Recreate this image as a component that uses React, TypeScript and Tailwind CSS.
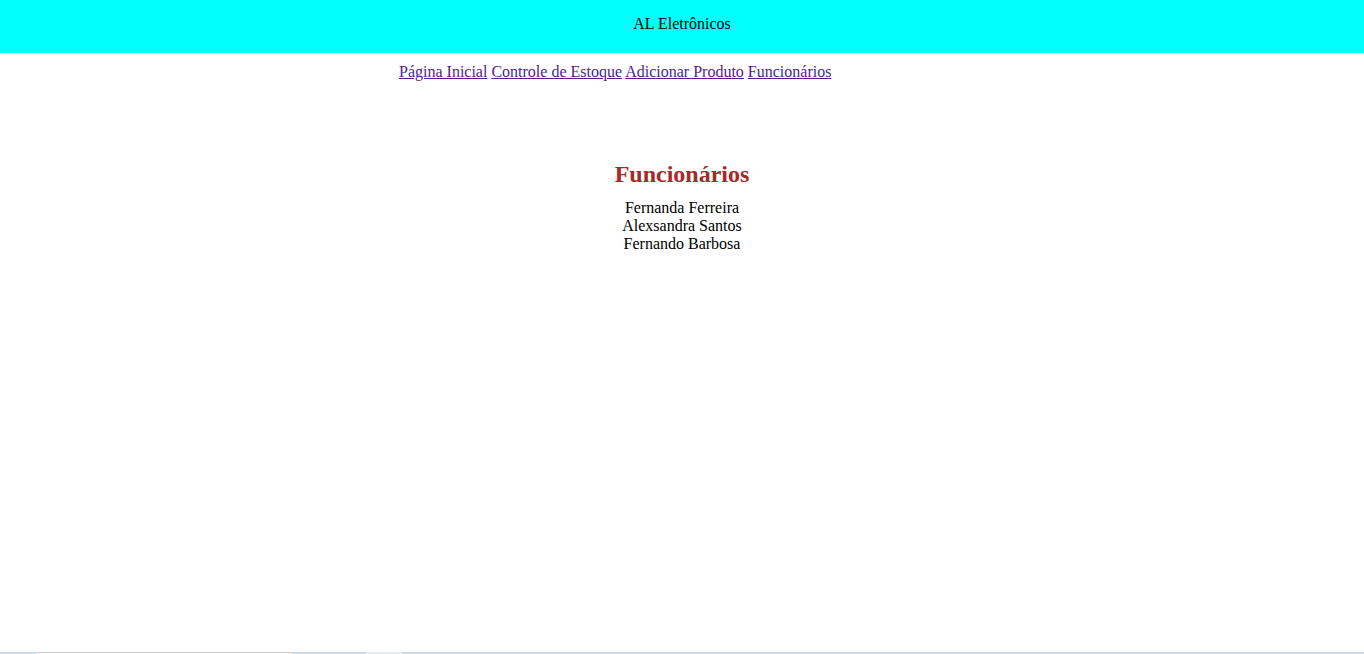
import React from "react";

export default function App() {
  const serif = { fontFamily: '"Liberation Serif", "Times New Roman", serif' };
  return (
    <div className="h-[654px] flex flex-col bg-white text-black overflow-hidden" style={serif}>
      <div className="h-[53px] bg-[#00ffff] pt-[15px] text-center text-[16px] leading-[1.15]">
        AL Eletrônicos
      </div>
      <nav className="mt-[10px] pl-[399px] text-[16px] leading-[1.15] text-[#551a8b]">
        <a href="#" className="underline">Página Inicial</a>{" "}
        <a href="#" className="underline">Controle de Estoque</a>{" "}
        <a href="#" className="underline">Adicionar Produto</a>{" "}
        <a href="#" className="underline">Funcionários</a>
      </nav>
      <h2 className="mt-[80px] text-center text-[24px] font-bold leading-[1.15] text-[#a52a2a]">
        Funcionários
      </h2>
      <div className="mt-[10px] text-center text-[16px] leading-[18px]">
        <div>Fernanda Ferreira</div>
        <div>Alexsandra Santos</div>
        <div>Fernando Barbosa</div>
      </div>
      <div className="mt-auto flex h-[2px]">
        <div className="w-[36px] bg-[#cdd9e3]" />
        <div className="w-[256px] border-t border-[#c8c8c8] bg-white" />
        <div className="w-[74px] bg-[#cdd9e3]" />
        <div className="w-[36px] bg-[#e6ecf1]" />
        <div className="flex-1 bg-[#cdd9e3]" />
      </div>
    </div>
  );
}
